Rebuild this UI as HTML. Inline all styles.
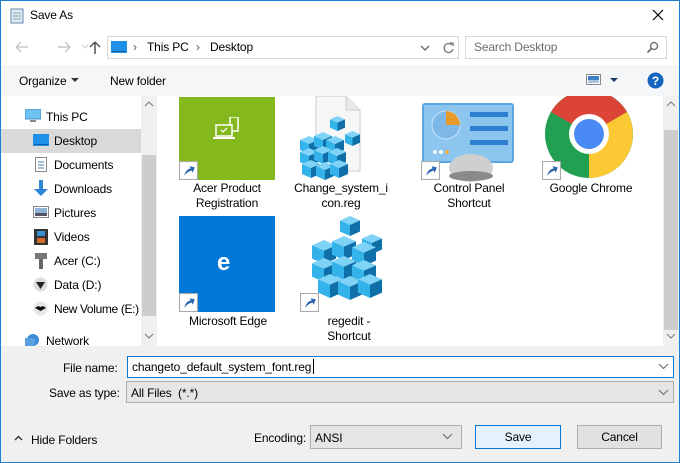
<!DOCTYPE html>
<html><head><meta charset="utf-8"><style>
*{box-sizing:border-box;margin:0;padding:0}
body{width:680px;height:463px;overflow:hidden;font-family:"Liberation Sans",sans-serif;font-size:12px;color:#000;background:#fff;position:relative;letter-spacing:-0.15px}
.abs{position:absolute}
.win{position:absolute;left:0;top:0;width:680px;height:463px;border:1px solid #1c7fd1}
.lbl{position:absolute;font-size:12px;white-space:nowrap}
.nav{position:absolute;left:54px;font-size:12px}
.cap{position:absolute;width:120px;text-align:center;font-size:12px;line-height:15px}
</style></head><body>
<svg width="0" height="0" style="position:absolute"><defs>
<symbol id="cube" viewBox="1 1 18 18"><polygon points="10,1 19,5 10,9 1,5" fill="#7fd3f7"/><polygon points="1,5 10,9 10,19 1,15" fill="#34b3ea"/><polygon points="10,9 19,5 19,15 10,19" fill="#0f6fa8"/></symbol>
<symbol id="arrow" viewBox="0 0 18 18"><rect x="0.5" y="0.5" width="17" height="17" fill="#fff" stroke="#aaa"/><path d="M5 14 Q6 8 11 7 L10 5 L15 6 L13 11 L12 9 Q8 10 5 14Z" fill="#2a66b0"/></symbol>
</defs></svg>
<div class="win"></div>
<svg class="abs" style="left:9px;top:7px" width="16" height="17"><rect x="2" y="2" width="12" height="14" fill="#dfe9f3" stroke="#6a86a8"/><path d="M4 6h8M4 9h8M4 12h8" stroke="#8aa"/></svg>
<div class="lbl" style="left:30px;top:8px;font-size:12px">Save As</div>
<svg class="abs" style="left:652px;top:9px" width="12" height="12"><path d="M1 1L11 11M11 1L1 11" stroke="#000" stroke-width="1.2"/></svg>
<svg class="abs" style="left:12px;top:39px" width="95" height="16"><path d="M4 8h12M4 8l5-5M4 8l5 5" stroke="#c8c8c8" stroke-width="1.5" fill="none"/><path d="M46 8h12M58 8l-5-5M58 8l-5 5" stroke="#c8c8c8" stroke-width="1.5" fill="none"/><path d="M70 6l3 3 3-3" stroke="#c8c8c8" fill="none"/><path d="M83 15V3M83 3l-5 5M83 3l5 5" stroke="#555" stroke-width="1.5" fill="none"/></svg>
<div class="abs" style="left:107px;top:36px;width:352px;height:23px;border:1px solid #d9d9d9"></div>
<div class="abs" style="left:439px;top:36px;width:20px;height:23px;border:1px solid #d9d9d9;border-left:none"></div>
<svg class="abs" style="left:111px;top:41px" width="16" height="13"><rect x="0" y="0" width="16" height="12" fill="#1e90e6"/><rect x="1" y="10" width="14" height="1" fill="#0b5fa8"/></svg>
<div class="lbl" style="left:133px;top:40px;color:#555">›</div>
<div class="lbl" style="left:147px;top:40px">This PC</div>
<div class="lbl" style="left:196px;top:40px;color:#555">›</div>
<div class="lbl" style="left:210px;top:40px">Desktop</div>
<svg class="abs" style="left:420px;top:44px" width="12" height="8"><path d="M1 2l4 4 4-4" stroke="#666" fill="none" stroke-width="1.3"/></svg>
<svg class="abs" style="left:441px;top:40px" width="16" height="16"><path d="M11 5A4.5 4.5 0 1 0 12 9" stroke="#777" fill="none" stroke-width="1.3"/><path d="M9 3h3v3" stroke="#777" fill="none" stroke-width="1.3"/></svg>
<div class="abs" style="left:465px;top:36px;width:202px;height:23px;border:1px solid #d9d9d9"></div>
<div class="lbl" style="left:474px;top:40px;color:#6d6d6d">Search Desktop</div>
<svg class="abs" style="left:646px;top:41px" width="14" height="14"><circle cx="8" cy="5" r="3.5" stroke="#666" fill="none" stroke-width="1.3"/><path d="M5.5 7.5L1.5 11.5" stroke="#666" stroke-width="1.6"/></svg>
<div class="abs" style="left:1px;top:65px;width:678px;height:31px;background:#f5f6f7"></div>
<div class="lbl" style="left:19px;top:74px">Organize</div>
<svg class="abs" style="left:71px;top:78px" width="9" height="5"><path d="M0 0h8L4 4z" fill="#333"/></svg>
<div class="lbl" style="left:110px;top:74px">New folder</div>
<svg class="abs" style="left:586px;top:74px" width="16" height="12"><rect x="0.5" y="0.5" width="14" height="10" fill="#fff" stroke="#888"/><rect x="2" y="2" width="11" height="7" fill="#3d7fc0"/><rect x="2" y="6" width="11" height="3" fill="#a8c6e0"/></svg>
<svg class="abs" style="left:610px;top:78px" width="9" height="5"><path d="M0 0h8L4 4z" fill="#1a3a6a"/></svg>
<svg class="abs" style="left:647px;top:72px" width="17" height="17"><circle cx="8.5" cy="8.5" r="8" fill="#1565c0"/><text x="8.5" y="13" font-size="12" font-weight="bold" fill="#fff" text-anchor="middle" font-family="Liberation Sans">?</text></svg>
<div class="abs" style="left:1px;top:129px;width:140px;height:24px;background:#d9d9d9"></div>
<div class="abs" style="left:141px;top:96px;width:16px;height:250px;background:#f0f0f0"></div>
<div class="abs" style="left:142px;top:155px;width:14px;height:161px;background:#cdcdcd"></div>
<svg class="abs" style="left:144px;top:101px" width="10" height="6"><path d="M1 5l4-4 4 4" stroke="#777" fill="none"/></svg>
<svg class="abs" style="left:144px;top:333px" width="10" height="6"><path d="M1 1l4 4 4-4" stroke="#777" fill="none"/></svg>
<svg class="abs" style="left:25px;top:109px" width="16" height="14"><rect x="0" y="0" width="16" height="10" fill="#6fc3f3" stroke="#4a8cc4"/><rect x="5" y="11" width="6" height="2" fill="#888"/></svg>
<div class="lbl" style="left:46px;top:110px">This PC</div>
<svg class="abs" style="left:33px;top:134px" width="16" height="13"><rect x="0" y="0" width="16" height="12" fill="#1e90e6"/><rect x="1" y="10" width="14" height="1" fill="#0b5fa8"/></svg>
<div class="nav" style="top:134px">Desktop</div>
<svg class="abs" style="left:35px;top:157px" width="12" height="15"><rect x="0.5" y="0.5" width="11" height="14" fill="#fff" stroke="#888"/><path d="M3 5h6M3 8h6M3 11h6" stroke="#4a7fb8"/></svg>
<div class="nav" style="top:158px">Documents</div>
<svg class="abs" style="left:33px;top:180px" width="16" height="17"><path d="M6 0h4v9h5l-7 7-7-7h5z" fill="#2f86d6"/></svg>
<div class="nav" style="top:182px">Downloads</div>
<svg class="abs" style="left:33px;top:206px" width="16" height="12"><rect x="0.5" y="0.5" width="15" height="11" fill="#fff" stroke="#888"/><rect x="2" y="2" width="12" height="8" fill="#8fb3d6"/><rect x="2" y="7" width="12" height="3" fill="#556"/></svg>
<div class="nav" style="top:206px">Pictures</div>
<svg class="abs" style="left:34px;top:229px" width="14" height="16"><rect x="0" y="0" width="14" height="16" fill="#333"/><rect x="3" y="2" width="8" height="5" fill="#3a8fd0"/><rect x="3" y="9" width="8" height="5" fill="#d46a2a"/></svg>
<div class="nav" style="top:230px">Videos</div>
<svg class="abs" style="left:35px;top:253px" width="12" height="16"><rect x="0" y="0" width="12" height="6" fill="#777"/><rect x="4" y="6" width="4" height="10" fill="#666"/></svg>
<div class="nav" style="top:254px">Acer (C:)</div>
<svg class="abs" style="left:33px;top:277px" width="15" height="15"><circle cx="7.5" cy="7.5" r="7" fill="#ddd"/><path d="M3 5h9l-4.5 7z" fill="#222"/></svg>
<div class="nav" style="top:278px">Data (D:)</div>
<svg class="abs" style="left:33px;top:301px" width="15" height="15"><circle cx="7.5" cy="7.5" r="7" fill="#e6e6e6"/><path d="M2 7l3-2 2.5 1 2.5-1 3 2-5.5 3z" fill="#111"/></svg>
<div class="nav" style="top:302px;letter-spacing:-0.35px">New Volume (E:)</div>
<svg class="abs" style="left:25px;top:332px" width="16" height="14"><circle cx="8" cy="8" r="6" fill="#3b8bd8"/><rect x="0" y="6" width="10" height="8" fill="#5aa0e0"/></svg>
<div class="lbl" style="left:46px;top:334px">Network</div>
<div class="abs" style="left:663px;top:96px;width:16px;height:250px;background:#f0f0f0"></div>
<div class="abs" style="left:664px;top:130px;width:14px;height:200px;background:#cdcdcd"></div>
<svg class="abs" style="left:666px;top:101px" width="10" height="6"><path d="M1 5l4-4 4 4" stroke="#777" fill="none"/></svg>
<svg class="abs" style="left:666px;top:333px" width="10" height="6"><path d="M1 1l4 4 4-4" stroke="#777" fill="none"/></svg>
<div class="abs" style="left:179px;top:97px;width:96px;height:83px;background:#85b81c"></div>
<svg class="abs" style="left:212px;top:117px" width="30" height="26"><rect x="18" y="0" width="8" height="14" fill="none" stroke="#fff" stroke-width="1.5"/><rect x="4" y="8" width="16" height="11" fill="#85b81c" stroke="#fff" stroke-width="1.5"/><rect x="1" y="20" width="22" height="2" fill="#fff"/><path d="M9 13l2 2 4-4" stroke="#fff" fill="none" stroke-width="1.3"/></svg>
<svg class="abs" style="left:179px;top:161px" width="19" height="19"><use href="#arrow"/></svg>
<div class="cap" style="left:167px;top:181px">Acer Product<br>Registration</div>
<svg class="abs" style="left:296px;top:96px" width="90" height="86"><path d="M20 0H50L64 14V75H20Z" fill="#f6f6f6" stroke="#ccc"/><path d="M50 0V14H64" fill="#e8e8e8" stroke="#ccc"/>
<use href="#cube" x="34" y="20" width="15" height="15"/><use href="#cube" x="49" y="35" width="15" height="15"/>
<use href="#cube" x="4" y="40" width="18" height="18"/><use href="#cube" x="18" y="36" width="18" height="18"/><use href="#cube" x="30" y="40" width="18" height="18"/>
<use href="#cube" x="4" y="52" width="18" height="18"/><use href="#cube" x="18" y="50" width="18" height="18"/><use href="#cube" x="32" y="52" width="18" height="18"/>
<use href="#cube" x="6" y="64" width="18" height="18"/><use href="#cube" x="20" y="66" width="18" height="18"/><use href="#cube" x="34" y="64" width="18" height="18"/></svg>
<div class="cap" style="left:281px;top:181px">Change_system_i<br>con.reg</div>
<svg class="abs" style="left:421px;top:100px" width="96" height="82"><rect x="1" y="3" width="92" height="60" rx="3" fill="#5ba8e0"/><rect x="3" y="5" width="88" height="56" fill="#8cc6ef"/><circle cx="25" cy="25" r="14" fill="#7db8e6" stroke="#c6e3f8"/><path d="M25 11A14 14 0 0 1 39 25H25Z" fill="#e99a2a"/><rect x="49" y="12" width="38" height="5" fill="#2f7fd0"/><rect x="49" y="26" width="38" height="5" fill="#2f7fd0"/><rect x="49" y="40" width="38" height="5" fill="#2f7fd0"/><circle cx="14" cy="52" r="2" fill="#fff"/><circle cx="20" cy="52" r="2" fill="#fff"/><circle cx="26" cy="52" r="2" fill="#f4b040"/><ellipse cx="50" cy="68" rx="22" ry="14" fill="#cfcfcf"/><ellipse cx="50" cy="76" rx="22" ry="5" fill="#8a8a8a"/></svg>
<svg class="abs" style="left:421px;top:161px" width="19" height="19"><use href="#arrow"/></svg>
<div class="cap" style="left:409px;top:181px">Control Panel<br>Shortcut</div>
<svg class="abs" style="left:545px;top:96px" width="90" height="82"><circle cx="44" cy="38" r="44" fill="#21a051"/><path d="M44 38L6 16A44 44 0 0 1 82 16Z" fill="#db4437"/><path d="M44 38L82 16A44 44 0 0 1 44 82 Z" fill="#fcc934"/><circle cx="44" cy="38" r="20" fill="#fff"/><circle cx="44" cy="38" r="15" fill="#4a8af4"/></svg>
<svg class="abs" style="left:542px;top:161px" width="19" height="19"><use href="#arrow"/></svg>
<div class="cap" style="left:531px;top:181px">Google Chrome</div>
<div class="abs" style="left:179px;top:216px;width:96px;height:96px;background:#0078d7"></div>
<div class="lbl" style="left:217px;top:249px;color:#fff;font-size:24px;font-weight:bold">e</div>
<svg class="abs" style="left:179px;top:293px" width="19" height="19"><use href="#arrow"/></svg>
<div class="cap" style="left:168px;top:314px">Microsoft Edge</div>
<svg class="abs" style="left:310px;top:216px" width="80" height="96"><use href="#cube" x="30" y="0" width="20" height="20"/><use href="#cube" x="52" y="18" width="20" height="20"/>
<use href="#cube" x="2" y="24" width="24" height="24"/><use href="#cube" x="22" y="20" width="24" height="24"/><use href="#cube" x="42" y="26" width="24" height="24"/>
<use href="#cube" x="2" y="42" width="24" height="24"/><use href="#cube" x="22" y="40" width="24" height="24"/><use href="#cube" x="42" y="44" width="24" height="24"/>
<use href="#cube" x="8" y="58" width="24" height="24"/><use href="#cube" x="28" y="60" width="24" height="24"/><use href="#cube" x="48" y="58" width="24" height="24"/></svg>
<svg class="abs" style="left:300px;top:293px" width="19" height="19"><use href="#arrow"/></svg>
<div class="cap" style="left:289px;top:314px">regedit -<br>Shortcut</div>
<div class="abs" style="left:1px;top:346px;width:678px;height:116px;background:#f0f0f0"></div>
<div class="lbl" style="left:63px;top:361px">File name:</div>
<div class="abs" style="left:127px;top:356px;width:547px;height:22px;background:#fff;border:1px solid #0078d7"></div>
<div class="lbl" style="left:132px;top:360px">changeto_default_system_font.reg</div>
<div class="abs" style="left:313px;top:359px;width:1px;height:15px;background:#000"></div>
<svg class="abs" style="left:658px;top:363px" width="11" height="7"><path d="M1 1l4.5 4.5L10 1" stroke="#666" fill="none"/></svg>
<div class="lbl" style="left:49px;top:386px">Save as type:</div>
<div class="abs" style="left:126px;top:381px;width:548px;height:22px;background:#e5e5e5;border:1px solid #adadad"></div>
<div class="lbl" style="left:131px;top:386px">All Files&nbsp; (*.*)</div>
<svg class="abs" style="left:658px;top:389px" width="11" height="7"><path d="M1 1l4.5 4.5L10 1" stroke="#666" fill="none"/></svg>
<svg class="abs" style="left:14px;top:435px" width="9" height="6"><path d="M1 5l3.5-3.5L8 5" stroke="#333" fill="none" stroke-width="1.4"/></svg>
<div class="lbl" style="left:31px;top:433px">Hide Folders</div>
<div class="lbl" style="left:254px;top:431px">Encoding:</div>
<div class="abs" style="left:310px;top:425px;width:152px;height:24px;background:#e5e5e5;border:1px solid #adadad"></div>
<div class="lbl" style="left:315px;top:431px">ANSI</div>
<svg class="abs" style="left:442px;top:433px" width="11" height="7"><path d="M1 1l4.5 4.5L10 1" stroke="#666" fill="none"/></svg>
<div class="abs" style="left:475px;top:425px;width:86px;height:24px;background:#e5f1fb;border:1px solid #0078d7;text-align:center;line-height:22px">Save</div>
<div class="abs" style="left:577px;top:425px;width:85px;height:24px;background:#e1e1e1;border:1px solid #adadad;text-align:center;line-height:22px">Cancel</div>
</body></html>
